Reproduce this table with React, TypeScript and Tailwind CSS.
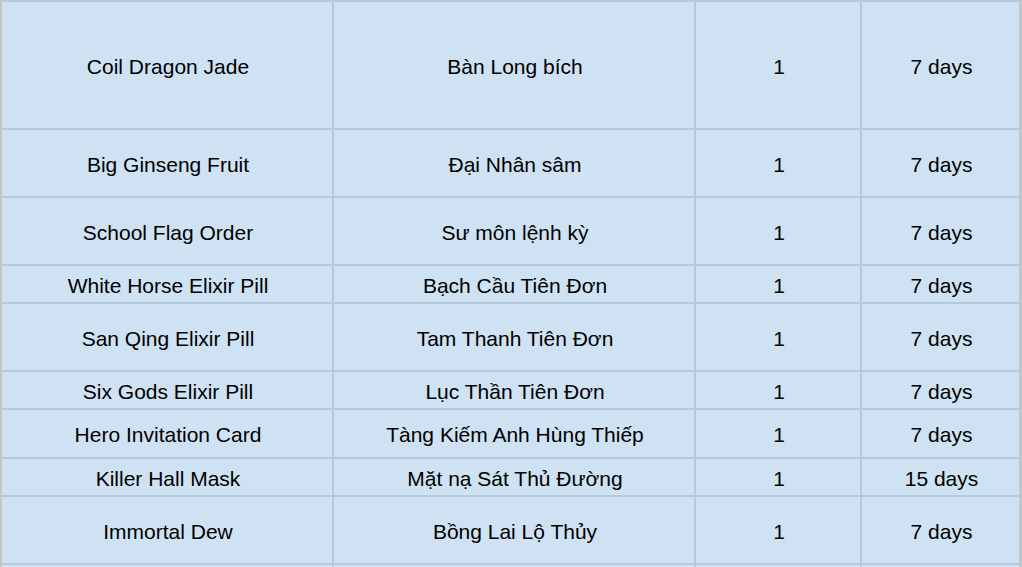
import React from "react";

const rows: { en: string; vi: string; qty: string; dur: string; h: string }[] = [
  { en: "Coil Dragon Jade", vi: "Bàn Long bích", qty: "1", dur: "7 days", h: "h-[126px]" },
  { en: "Big Ginseng Fruit", vi: "Đại Nhân sâm", qty: "1", dur: "7 days", h: "h-[66px]" },
  { en: "School Flag Order", vi: "Sư môn lệnh kỳ", qty: "1", dur: "7 days", h: "h-[66px]" },
  { en: "White Horse Elixir Pill", vi: "Bạch Cầu Tiên Đơn", qty: "1", dur: "7 days", h: "h-[36px]" },
  { en: "San Qing Elixir Pill", vi: "Tam Thanh Tiên Đơn", qty: "1", dur: "7 days", h: "h-[66px]" },
  { en: "Six Gods Elixir Pill", vi: "Lục Thần Tiên Đơn", qty: "1", dur: "7 days", h: "h-[36px]" },
  { en: "Hero Invitation Card", vi: "Tàng Kiếm Anh Hùng Thiếp", qty: "1", dur: "7 days", h: "h-[47px]" },
  { en: "Killer Hall Mask", vi: "Mặt nạ Sát Thủ Đường", qty: "1", dur: "15 days", h: "h-[36px]" },
  { en: "Immortal Dew", vi: "Bồng Lai Lộ Thủy", qty: "1", dur: "7 days", h: "h-[66px]" },
  { en: "", vi: "", qty: "", dur: "", h: "h-[40px]" },
];

export default function App() {
  return (
    <div className="w-[1022px] h-[567px] overflow-hidden bg-white flex">
      <div className="w-[2px] shrink-0 bg-[#c4c6c8]" />
      <div className="flex flex-col gap-[2px] pt-[2px] bg-[#b6c9da] w-[1019px] shrink-0 pr-[2px]">
        {rows.map((r, i) => (
          <div
            key={i}
            className={`grid grid-cols-[330px_360px_164px_157px] gap-[2px] shrink-0 ${r.h}`}
          >
            {[r.en, r.vi, r.qty, r.dur].map((t, j) => (
              <div
                key={j}
                className="bg-[#cfe2f3] flex items-center justify-center pt-[2px] pl-[2px] text-[21px] text-black leading-none"
                style={{ fontFamily: '"Liberation Sans", Arial, sans-serif' }}
              >
                {t}
              </div>
            ))}
          </div>
        ))}
      </div>
      <div className="w-[1px] shrink-0 bg-[#c4c6c8]" />
    </div>
  );
}
